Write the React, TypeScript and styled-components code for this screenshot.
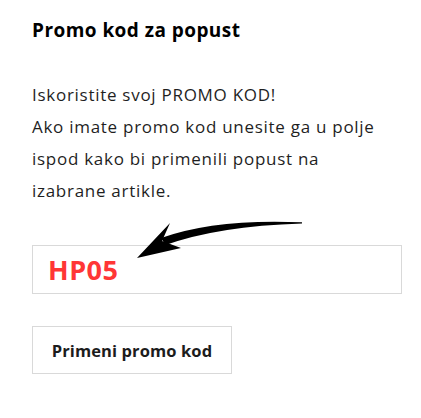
import React from "react";
import styled, { createGlobalStyle } from "styled-components";

const GlobalStyle = createGlobalStyle`
  html, body {
    margin: 0;
    padding: 0;
    background: #fff;
  }
  body {
    font-family: "Open Sans", "Liberation Sans", sans-serif;
    color: #1c1c1c;
  }
`;

const Panel = styled.div`
  position: relative;
  width: 421px;
  height: 418px;
  box-sizing: border-box;
  padding: 18px 19px 0 32px;
  display: flex;
  flex-direction: column;
`;

const Title = styled.h3`
  margin: 0;
  font-size: 19px;
  line-height: 24px;
  font-weight: 700;
  letter-spacing: 0.45px;
  color: #000;
`;

const Intro = styled.p`
  margin: 37px 0 0;
  font-size: 17px;
  line-height: 32px;
  color: #1f1f1f;
  letter-spacing: 0.72px;
`;

const CodeField = styled.div`
  margin-top: 38px;
  height: 49px;
  box-sizing: border-box;
  border: 1px solid #d9d9d9;
  display: flex;
  align-items: center;
  padding-left: 15px;
`;

const Code = styled.span`
  font-size: 27px;
  font-weight: 700;
  color: #ff3636;
  letter-spacing: 0.5px;
`;

const ApplyButton = styled.button`
  margin-top: 32px;
  width: 200px;
  height: 48px;
  box-sizing: border-box;
  border: 1px solid #d9d9d9;
  background: #fff;
  font-family: inherit;
  font-size: 16.5px;
  font-weight: 700;
  letter-spacing: 0.1px;
  color: #1c1c1c;
  cursor: pointer;
`;

const Arrow = styled.svg`
  position: absolute;
  left: 0;
  top: 0;
  pointer-events: none;
`;

export default function App() {
  return (
    <>
      <GlobalStyle />
      <Panel>
        <Title>Promo kod za popust</Title>
        <Intro>
          Iskoristite svoj PROMO KOD!
          <br />
          Ako imate promo kod unesite ga u polje
          <br />
          ispod kako bi primenili popust na
          <br />
          izabrane artikle.
        </Intro>
        <CodeField>
          <Code>HP05</Code>
        </CodeField>
        <ApplyButton type="button">Primeni promo kod</ApplyButton>
        <Arrow width="421" height="418" viewBox="0 0 421 418">
          <path
            d="M302 222.3 Q215 218.5 161 238 L165.5 245 Q218 226 302 223.4 Z"
            fill="#000"
          />
          <path d="M137 258 L170 223 L162 241 L181 248 Z" fill="#000" />
        </Arrow>
      </Panel>
    </>
  );
}
